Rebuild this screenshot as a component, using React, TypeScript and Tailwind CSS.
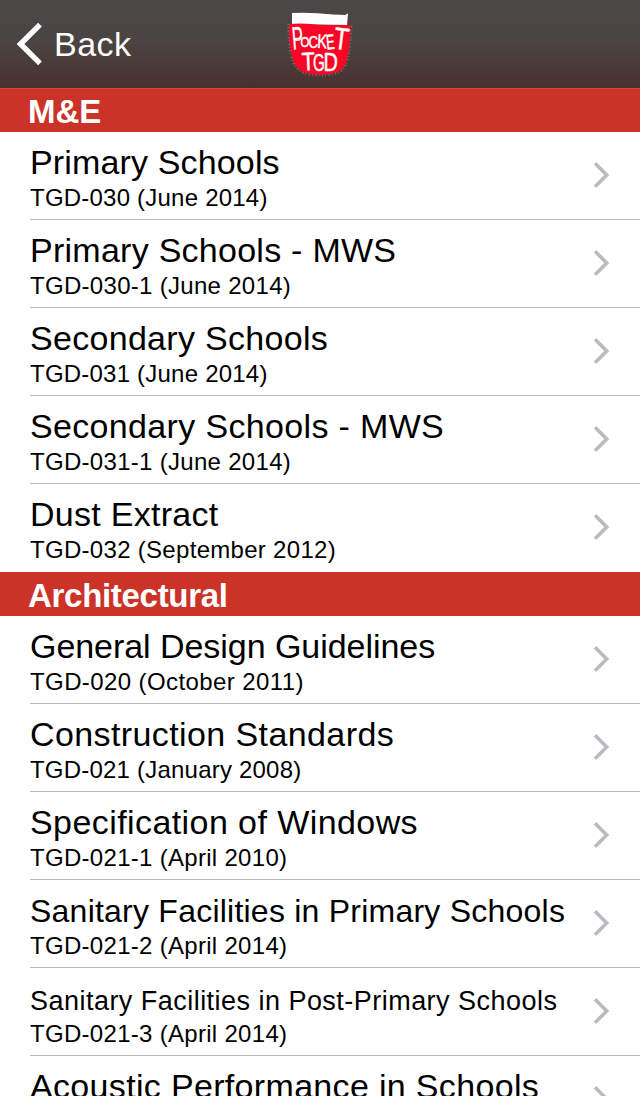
type Item = { title: string; detail: string; titleClass: string; detailClass: string };
type Section = { name: string; nameClass: string; items: Item[] };

const sections: Section[] = [
  {
    name: 'M&E',
    nameClass: 'tracking-[0px]',
    items: [
      { title: 'Primary Schools', detail: 'TGD-030 (June 2014)', titleClass: 'text-[34px] tracking-[0.15px]', detailClass: 'tracking-[0.22px]' },
      { title: 'Primary Schools - MWS', detail: 'TGD-030-1 (June 2014)', titleClass: 'text-[34px] tracking-[0.26px]', detailClass: 'tracking-[0.3px]' },
      { title: 'Secondary Schools', detail: 'TGD-031 (June 2014)', titleClass: 'text-[34px] tracking-[0.3px]', detailClass: 'tracking-[0.22px]' },
      { title: 'Secondary Schools - MWS', detail: 'TGD-031-1 (June 2014)', titleClass: 'text-[34px] tracking-[0.34px]', detailClass: 'tracking-[0.3px]' },
      { title: 'Dust Extract', detail: 'TGD-032 (September 2012)', titleClass: 'text-[34px] tracking-[0.27px]', detailClass: 'tracking-[0.3px]' },
    ],
  },
  {
    name: 'Architectural',
    nameClass: 'tracking-[-0.3px]',
    items: [
      { title: 'General Design Guidelines', detail: 'TGD-020 (October 2011)', titleClass: 'text-[34px] tracking-[-0.05px]', detailClass: 'tracking-[0.4px]' },
      { title: 'Construction Standards', detail: 'TGD-021 (January 2008)', titleClass: 'text-[34px] tracking-[0.4px]', detailClass: 'tracking-[0.21px]' },
      { title: 'Specification of Windows', detail: 'TGD-021-1 (April 2010)', titleClass: 'text-[34px] tracking-[0.42px]', detailClass: 'tracking-[0.3px]' },
      { title: 'Sanitary Facilities in Primary Schools', detail: 'TGD-021-2 (April 2014)', titleClass: 'pt-px text-[32px] tracking-[0.23px]', detailClass: 'tracking-[0.3px]' },
      { title: 'Sanitary Facilities in Post-Primary Schools', detail: 'TGD-021-3 (April 2014)', titleClass: 'pt-[3px] text-[27px] tracking-[0.47px]', detailClass: 'tracking-[0.3px]' },
      { title: 'Acoustic Performance in Schools', detail: 'TGD-021-4 (April 2014)', titleClass: 'text-[34px] tracking-[0.33px]', detailClass: 'tracking-[0.3px]' },
    ],
  },
];

const letters = [
  { c: 'P', x: 13, y: 49.5, size: 32, r: -5, w: 0.52 },
  { c: 'O', x: 20.6, y: 47.2, size: 15, r: 0, w: 0.76 },
  { c: 'C', x: 28.6, y: 47.7, size: 16.5, r: 0, w: 0.8 },
  { c: 'K', x: 37, y: 47.7, size: 19.5, r: 3, w: 0.74 },
  { c: 'E', x: 46.8, y: 49.5, size: 21, r: -5, w: 0.6 },
  { c: 'T', x: 52.8, y: 48.5, size: 31, r: 7, w: 0.78 },
  { c: 'T', x: 22, y: 70.5, size: 25.5, r: -2, w: 0.84 },
  { c: 'G', x: 33, y: 71, size: 24.5, r: 0, w: 0.62 },
  { c: 'D', x: 43.5, y: 70.5, size: 25.5, r: 0, w: 0.78 },
];

function Logo() {
  return (
    <svg width="80" height="88" viewBox="0 0 80 88" aria-label="Pocket TGD">
      <path d="M12 13 Q30 12 53 14.5 L65 15 L68 13.5 L67 25 L12 24Z" fill="#fff" />
      <path d="M9 24 Q25 22.5 39 25 Q56 25 71 25 Q70 43 68 56 Q65 69 58 72 Q43 77 25 73 Q15 69 12 58 Q8 40 9 24Z" fill="#f90526" />
      <path
        d="M8.5 24 Q8 40 11.5 58 Q15 70 25 73.5 Q43 78 59 72.5 Q66 69 68.5 56 Q71 43 71.5 25"
        fill="none"
        stroke="#766a68"
        strokeWidth="2.2"
        strokeDasharray="1.2 2 0.8 2.6"
      />
      {letters.map((l, i) => (
        <text
          key={i}
          transform={`translate(${l.x} ${l.y}) rotate(${l.r}) scale(${l.w} 1)`}
          fontSize={l.size}
          fill="#fff"
          stroke="#fff"
          strokeWidth="0.5"
          strokeLinejoin="round"
        >
          {l.c}
        </text>
      ))}
    </svg>
  );
}

function Row({ title, detail, titleClass, detailClass }: Item) {
  return (
    <li className="group flex h-[88px] pl-[30px]">
      <div className="flex min-w-0 flex-1 border-b border-[#bcbcbc] pt-2.5 group-last:border-transparent">
        <div className="min-w-0 flex-1 whitespace-nowrap">
          <div className={`h-[42px] leading-[40px] ${titleClass}`}>{title}</div>
          <div className={`text-2xl leading-7 ${detailClass}`}>{detail}</div>
        </div>
        <svg className="mt-[19px] mr-[29px] shrink-0" width="18" height="28" viewBox="0 0 18 28" fill="none" stroke="#bbbac1" strokeWidth="3.6">
          <path d="M2 2.2 L13.7 14 L2 25.8" />
        </svg>
      </div>
    </li>
  );
}

export default function App() {
  return (
    <div className="flex h-[1096px] w-[640px] flex-col overflow-hidden bg-white font-['Liberation_Sans',Arial,sans-serif] text-black">
      <header className="grid h-[88px] shrink-0 grid-cols-[280px_80px_280px] bg-linear-to-b from-[#4a4948] via-[#4a4341] to-[#49312e]">
        <button className="flex items-center pl-4 text-white">
          <svg width="28" height="44" viewBox="0 0 28 44" fill="none" stroke="#fff" strokeWidth="5.4">
            <path d="M24 2.7 L4.5 22 L24 41.3" />
          </svg>
          <span className="ml-2.5 text-[34px] leading-[40px] tracking-[0.5px]">Back</span>
        </button>
        <Logo />
      </header>
      {sections.map((s, i) => (
        <section key={s.name} className="shrink-0">
          <h2
            className={`h-11 bg-[#cb3329] pl-7 text-[33px] leading-[40px] font-bold text-white ${i === 0 ? 'border-t border-[#d24a35] pt-[3px]' : 'pt-1'} ${s.nameClass}`}
          >
            {s.name}
          </h2>
          <ul>
            {s.items.map((item) => (
              <Row key={item.title} {...item} />
            ))}
          </ul>
        </section>
      ))}
    </div>
  );
}
